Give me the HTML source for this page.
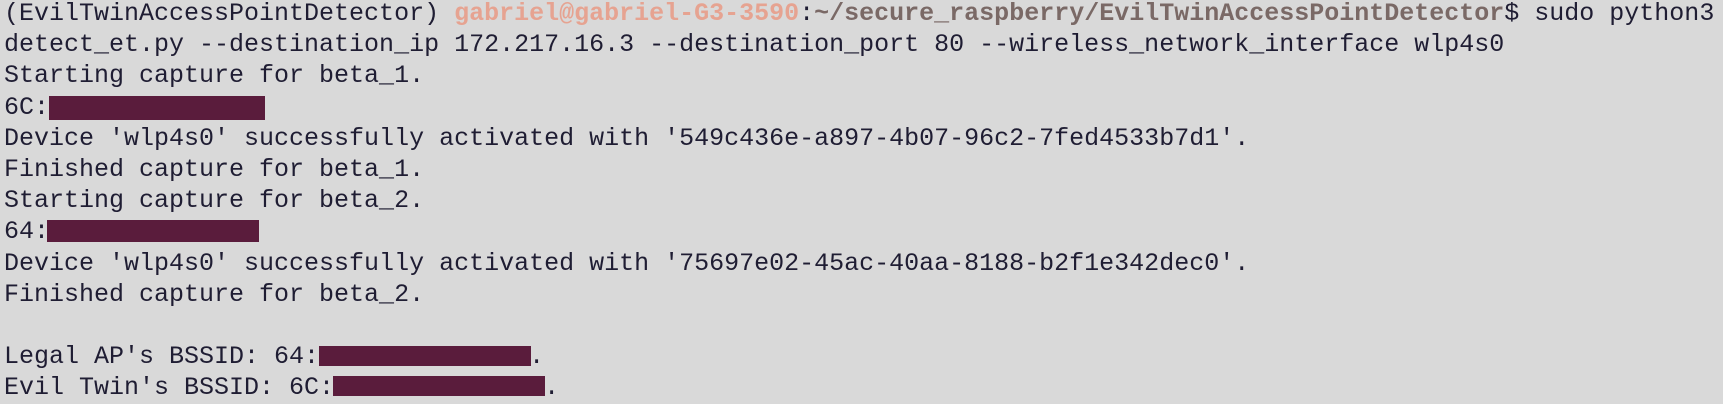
<!DOCTYPE html>
<html><head><meta charset="utf-8"><style>
html,body{margin:0;padding:0;}
body{width:1723px;height:403px;background:#d9d9d9;overflow:hidden;position:relative;}
#t{position:absolute;left:4px;top:-2px;font-family:"Liberation Mono","DejaVu Sans Mono",monospace;font-size:25px;line-height:31.2px;color:#1f1d33;white-space:pre;letter-spacing:0px;}
.u{color:#e6a391;font-weight:bold;}
.p{color:#7a6966;font-weight:bold;}
.b{position:absolute;background:#5a1c3c;}
</style></head><body>
<div id="t">(EvilTwinAccessPointDetector) <span class="u">gabriel@gabriel-G3-3590</span>:<span class="p">~/secure_raspberry/EvilTwinAccessPointDetector</span>$ sudo python3
detect_et.py --destination_ip 172.217.16.3 --destination_port 80 --wireless_network_interface wlp4s0
Starting capture for beta_1.
6C:
Device 'wlp4s0' successfully activated with '549c436e-a897-4b07-96c2-7fed4533b7d1'.
Finished capture for beta_1.
Starting capture for beta_2.
64:
Device 'wlp4s0' successfully activated with '75697e02-45ac-40aa-8188-b2f1e342dec0'.
Finished capture for beta_2.

Legal AP's BSSID: 64:              .
Evil Twin's BSSID: 6C:              .</div>
<div class="b" style="left:49px;top:96px;width:216px;height:24px;"></div>
<div class="b" style="left:47px;top:220px;width:212px;height:22px;"></div>
<div class="b" style="left:319px;top:346px;width:212px;height:20px;"></div>
<div class="b" style="left:333px;top:376px;width:212px;height:20px;"></div>
</body></html>
